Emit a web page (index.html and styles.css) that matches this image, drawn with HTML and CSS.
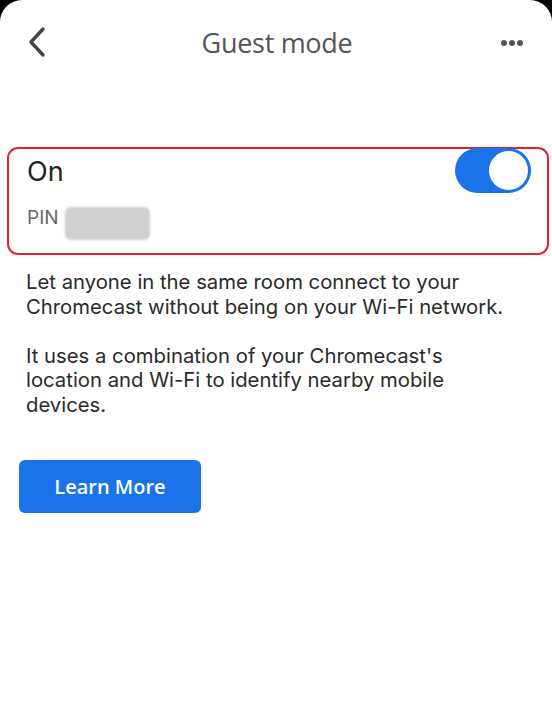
FILE: index.html
```html
<!DOCTYPE html>
<html lang="en">
<head>
    <meta charset="UTF-8">
    <meta name="viewport" content="width=device-width, initial-scale=1.0">
    <title>Guest mode</title>
    <link rel="stylesheet" href="styles.css">
</head>
<body>
    <div class="screen">
        <header class="topbar">
            <a class="back" href="#" aria-label="Back">
                <svg width="20" height="30" viewBox="0 0 20 30">
                    <path d="M16 2 L4 15 L16 28" fill="none" stroke="#444" stroke-width="3.4" stroke-linecap="round" stroke-linejoin="round"/>
                </svg>
            </a>
            <h1 class="title">Guest mode</h1>
            <a class="more" href="#" aria-label="More">
                <span></span><span></span><span></span>
            </a>
        </header>

        <section class="card">
            <div class="status">
                <div class="state">On</div>
                <div class="pin">
                    <span>PIN</span>
                    <span class="pin-value"></span>
                </div>
            </div>
            <div class="toggle on">
                <div class="knob"></div>
            </div>
        </section>

        <div class="info">
            <p>Let anyone in the same room connect to your Chromecast without being on your Wi-Fi network.</p>
            <p>It uses a combination of your Chromecast's location and Wi-Fi to identify nearby mobile devices.</p>
        </div>

        <button class="learn-more">Learn More</button>
    </div>
</body>
</html>
```

FILE: styles.css
```css
body {
    margin: 0;
    padding: 0;
    background-color: #000;
    font-family: Inter, "Liberation Sans", Arial, sans-serif;
}

.screen {
    background-color: #fff;
    min-height: 706px;
    border-radius: 22px 22px 0 0;
    overflow: hidden;
}

.topbar {
    display: flex;
    align-items: center;
    justify-content: space-between;
    height: 84px;
    padding: 0 27px 0 27px;
    box-sizing: border-box;
}

.back {
    display: flex;
    width: 20px;
    height: 30px;
}

.title {
    margin: 0 0 0 6px;
    font-family: "Open Sans", Roboto, sans-serif;
    font-weight: 400;
    font-size: 27px;
    color: #555;
    letter-spacing: -0.3px;
}

.more {
    display: flex;
    gap: 2px;
    width: 24px;
    margin-top: 2px;
}

.more span {
    width: 6px;
    height: 6px;
    border-radius: 50%;
    background-color: #555;
}

.card {
    display: flex;
    justify-content: space-between;
    align-items: flex-start;
    margin: 63px 3px 0 7px;
    height: 108px;
    box-sizing: border-box;
    border: 2px solid #e3232c;
    border-radius: 11px;
    padding: 0 16px 0 18px;
}

.state {
    margin-top: 7px;
    font-size: 27px;
    line-height: 32px;
    color: #222;
}

.pin {
    display: flex;
    align-items: center;
    gap: 6px;
    margin-top: 7px;
    font-size: 19px;
    color: #666;
}

.pin-value {
    display: inline-block;
    width: 85px;
    height: 33px;
    margin-top: 12px;
    border-radius: 6px;
    background-color: #cfcfcf;
    filter: blur(1px);
}

.toggle {
    width: 76px;
    height: 45px;
    border-radius: 23px;
    background-color: #1a73e8;
    margin-top: -1px;
    position: relative;
}

.knob {
    position: absolute;
    top: 3px;
    right: 3px;
    width: 39px;
    height: 39px;
    border-radius: 50%;
    background-color: #fff;
}

.info {
    width: 490px;
    padding: 0 26px;
    margin-top: 15px;
    font-size: 20.3px;
    line-height: 24.5px;
    color: #2a2a2a;
}

.info p {
    margin: 0 0 24.5px 0;
}

.learn-more {
    display: block;
    margin: 43px 0 0 19px;
    width: 182px;
    height: 53px;
    border: none;
    border-radius: 6px;
    background-color: #1a73e8;
    color: #fff;
    font-family: "Open Sans", Roboto, sans-serif;
    font-weight: 600;
    font-size: 20px;
}
```
